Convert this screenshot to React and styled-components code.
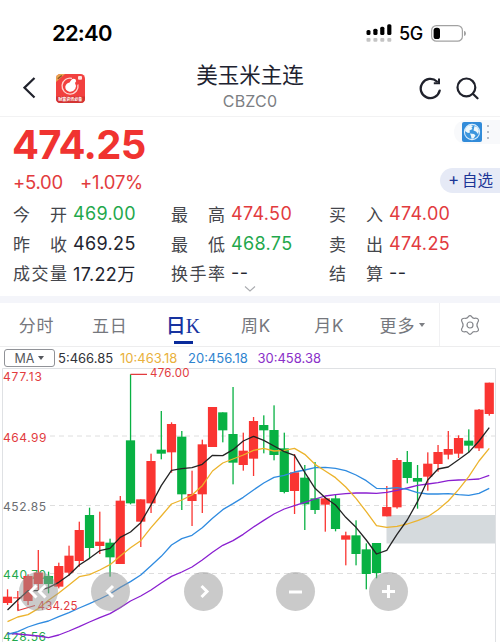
import React from 'react';
import styled, { createGlobalStyle } from 'styled-components';

const RED = '#e23b3e';
const GREEN = '#1fa84c';
const INK = '#23252f';

const GlobalStyle = createGlobalStyle`
  * {
    box-sizing: border-box;
  }

  body {
    margin: 0;
    background: #fff;
    overflow: hidden;
    font-family: Inter, 'Noto Sans CJK SC', sans-serif;
  }
`;

const quotes = [
  { label: '今开', value: '469.00', color: GREEN },
  { label: '最高', value: '474.50', color: RED },
  { label: '买入', value: '474.00', color: RED },
  { label: '昨收', value: '469.25', color: INK },
  { label: '最低', value: '468.75', color: GREEN },
  { label: '卖出', value: '474.25', color: RED },
  { label: '成交量', value: '17.22万', color: INK },
  { label: '换手率', value: '--', color: INK },
  { label: '结算', value: '--', color: INK },
];

const tabs = ['分时', '五日', '日K', '周K', '月K', '更多'];

// [up, high, bodyTop, bodyBottom, low], in thirds of a pixel below CHART_TOP
const candles = [
  [1, 673, 695, 714, 720], [1, 678, 697, 700, 736], [1, 628, 633, 708, 720], [1, 555, 623, 657, 678],
  [0, 620, 633, 657, 685], [1, 593, 603, 665, 670], [1, 542, 572, 623, 632], [1, 470, 495, 588, 605],
  [0, 428, 450, 549, 580], [1, 440, 530, 543, 567], [0, 521, 533, 577, 635], [1, 393, 407, 597, 597],
  [0, 28, 226, 415, 418], [1, 403, 403, 470, 546], [1, 266, 288, 415, 444], [0, 138, 254, 266, 283],
  [1, 172, 177, 262, 323], [0, 198, 215, 388, 435], [1, 317, 387, 408, 483], [1, 224, 238, 388, 444],
  [1, 126, 126, 246, 246], [0, 142, 142, 196, 232], [0, 66, 207, 293, 358], [1, 203, 257, 300, 317],
  [1, 156, 168, 281, 333], [0, 151, 180, 196, 265], [0, 121, 195, 270, 286], [0, 203, 250, 381, 385],
  [1, 267, 322, 378, 447], [0, 300, 338, 418, 495], [0, 291, 400, 435, 447], [1, 395, 400, 419, 500],
  [0, 387, 400, 492, 499], [1, 500, 511, 524, 601], [0, 466, 511, 567, 601], [0, 535, 553, 627, 673],
  [0, 534, 534, 624, 640], [1, 363, 426, 454, 454], [1, 279, 285, 427, 431], [0, 258, 291, 339, 355],
  [0, 300, 339, 350, 431], [1, 262, 296, 335, 377], [1, 240, 261, 297, 320], [1, 198, 252, 269, 283],
  [1, 211, 219, 266, 279], [0, 193, 227, 242, 262], [1, 132, 134, 250, 258], [1, 53, 53, 147, 152],
];

const averages = [
  {
    color: '#8a1fd0',
    points: [
      805, 807, 810, 813, 818, 810, 798, 785, 771, 758, 746, 728, 708, 693, 675, 654, 634, 621, 606, 585, 562, 541,
      527, 508, 486, 466, 447, 432, 422, 412, 402, 393, 389, 386, 384, 384, 385, 382, 376, 369, 361, 357, 353, 347,
      345, 344, 342, 331,
    ],
  },
  {
    color: '#2f8be0',
    points: [
      808, 800, 786, 776, 768, 755, 743, 729, 716, 702, 687, 667, 650, 630, 602, 574, 540, 521, 511, 488, 460, 434,
      416, 397, 375, 354, 337, 331, 321, 315, 308, 307, 310, 317, 330, 347, 370, 371, 368, 373, 383, 387, 387, 386,
      389, 391, 385, 370,
    ],
  },
  {
    color: '#ecb32c',
    points: [
      770, 756, 749, 731, 706, 684, 660, 635, 629, 615, 599, 573, 548, 527, 488, 453, 417, 405, 390, 362, 318, 294,
      282, 270, 256, 250, 258, 256, 250, 268, 298, 318, 338, 366, 400, 440, 482, 487, 484, 477, 467, 455, 434, 408,
      374, 335, 288, 250,
    ],
  },
  {
    color: '#242424',
    points: [
      735, 705, 677, 677, 668, 652, 630, 600, 580, 557, 550, 517, 501, 473, 420, 362, 316, 311, 308, 298, 271, 272,
      254, 228, 214, 226, 243, 260, 271, 322, 370, 398, 420, 457, 487, 525, 567, 556, 508, 465, 410, 345, 312, 306,
      284, 262, 228, 188,
    ],
  },
];

const CHART_TOP = 365;
const xAt = i => 7.5 + i * 10.25;
const yAt = v => CHART_TOP + v / 3;

const CandleChart = () => (
  <ChartSvg viewBox="0 368 500 274">
    <rect x="386.5" y="515" width="109" height="28.5" fill="#d5dadd" />
    <path d="M2.5 642V368.5H495.5V642" fill="none" stroke="#dfe1e4" />
    <path d="M50 436H495M50 505.5H495M50 573.5H495" stroke="#dedede" strokeDasharray="5 4" />
    <AxisText x="3" y="380.6" textLength="39" fill={RED}>477.13</AxisText>
    <AxisText x="3" y="441.8" textLength="43.5" fill={RED}>464.99</AxisText>
    <AxisText x="3" y="511.4" textLength="43" fill="#6b6d72">452.85</AxisText>
    <AxisText x="3" y="578.8" textLength="43" fill={GREEN}>440.70</AxisText>
    <AxisText x="3" y="640.8" textLength="43" fill={GREEN}>428.56</AxisText>
    {candles.map(([up, high, top, bottom, low], i) => {
      const color = up ? '#fa3532' : '#08b143';
      return (
        <g key={i} fill={color}>
          <rect x={xAt(i) - 0.6} y={yAt(high)} width="1.3" height={(low - high) / 3} />
          <rect x={xAt(i) - 4.6} y={yAt(top)} width="9.2" height={(bottom - top) / 3} />
        </g>
      );
    })}
    {averages.map(({ color, points }) => (
      <polyline
        key={color}
        points={points.map((p, i) => `${xAt(i)},${yAt(p)}`).join(' ')}
        fill="none"
        stroke={color}
        strokeWidth="1.3"
        strokeLinejoin="round"
      />
    ))}
    <path d="M130.5 374.3H147M18 604V610.5L35 605.5" fill="none" stroke={RED} strokeWidth="1.2" />
    <AxisText x="150" y="377.2" textLength="39.5" $small fill={RED}>476.00</AxisText>
    <AxisText x="37.5" y="610.2" textLength="40" $small fill={RED}>434.25</AxisText>
  </ChartSvg>
);

const controls = [
  'M26.500 13.500L20.500 19.500L26.500 25.500M17.500 13.500L11.500 19.500L17.500 25.500',
  'M22 14L16.500 19.500L22 25',
  'M17.500 14L23 19.500L17.500 25',
  'M13 20H26',
  'M13 19.500H26M19.500 13V26',
];

const App = () => (
  <Screen>
    <GlobalStyle />
    <StatusBar>
      <Clock>22:40</Clock>
      <Signal viewBox="0 0 26 18">
        <g fill="#000">
          <rect x="0.5" y="6" width="4" height="5" rx="1.5" />
          <rect x="7.3" y="4.7" width="4.2" height="6.3" rx="1.5" />
          <rect x="14.2" y="2.7" width="4.2" height="8.3" rx="1.5" />
          <rect x="21.2" y="0.3" width="4.2" height="10.7" rx="1.5" />
        </g>
        <g fill="#c4c4c4">
          <rect x="0.5" y="14" width="4" height="3.7" rx="1" />
          <rect x="7.4" y="14" width="4" height="3.7" rx="1" />
          <rect x="14.3" y="14" width="4" height="3.7" rx="1" />
          <rect x="21.3" y="14" width="4" height="3.7" rx="1" />
        </g>
      </Signal>
      <Network>5G</Network>
      <Battery viewBox="0 0 36 17">
        <rect x="0.6" y="0.6" width="30.8" height="15.6" rx="4.8" fill="none" stroke="#a2a2a2" strokeWidth="1.2" />
        <rect x="2.6" y="2.8" width="6.4" height="11.2" rx="2.6" />
        <path d="M33 5.8q2 .5 2 2.600t-2 2.600z" fill="#a2a2a2" />
      </Battery>
    </StatusBar>

    <Header>
      <HeaderSide>
        <svg width="13" height="22" viewBox="0 0 13 22" fill="none" stroke="#20222c" strokeWidth="2.2">
          <path d="M11.500 1L1.500 10.700L11.500 20.500" />
        </svg>
        <AppLogo viewBox="0 0 29 29">
          <rect width="29" height="29" rx="4.5" fill="#f2403f" />
          <path d="M4.500 0H9L0 8V4.500Q0 0 4.500 0Z" fill="#e8a552" />
          <path d="M1.800 4.800L5.800 1.500" stroke="#865324" strokeWidth="1.3" />
          <path d="M16 4.300A8 8 0 1 0 21.900 10.500" fill="none" stroke="#ffd5d0" strokeWidth="1.3" />
          <path d="M14.500 7Q16.500 3.600 19.500 5.200Q21 7.200 19 9Q20.700 11.500 19.300 14.800Q17 18.500 13.200 17.700Q9 16.500 9.300 12.600Q10.200 9.200 13.600 8.600Z" fill="#fff" />
          <rect x="22" y="2" width="4" height="3.7" rx="1" fill="#ffe2df" />
          <path d="M0 22.500H29V24.500Q29 29 24.500 29H4.500Q0 29 0 24.500Z" fill="#d43433" />
          <LogoText x="2.3" y="27.3" textLength="24">财富资讯必备</LogoText>
        </AppLogo>
      </HeaderSide>
      <Titles>
        <Title>美玉米主连</Title>
        <Code>CBZC0</Code>
      </Titles>
      <HeaderSide $end>
        <svg width="23" height="23" viewBox="0 0 23 23" fill="none" stroke="#20222c" strokeWidth="2.3">
          <path d="M20.700 13.600A9.600 9.600 0 1 1 17.900 4.500" strokeLinecap="round" />
          <path d="M20 1.400V6.200H14.800" strokeWidth="2" />
        </svg>
        <svg width="23" height="23" viewBox="0 0 23 23" fill="none" stroke="#20222c" strokeWidth="2.2">
          <circle cx="10.4" cy="10.4" r="8.9" />
          <path d="M16.800 16.800L21.500 21.300" strokeLinecap="round" />
        </svg>
      </HeaderSide>
    </Header>

    <Summary>
      <PriceRow>
        <Price>474.25</Price>
        <Market>
          <svg width="20" height="20" viewBox="0 0 20 20">
            <rect width="20" height="20" rx="2" fill="#318bd9" />
            <circle cx="10" cy="10" r="7.6" fill="#3c96de" stroke="#d9edfc" strokeWidth="1.1" />
            <path d="M3 8L5 4.500L8.500 3L11 4L9.500 5.500L10.500 7L7.500 8.500L8 10.500L6 11L3.500 9.500ZM12.500 4L15.500 5.500L17 9L16 12L14 9.500L11.500 8.500ZM8 11.500L12 12L13.500 13.500L11.500 16.500L9.500 16.800L9 14Z" fill="#edf7fb" />
          </svg>
          <Dots><i /><i /><i /></Dots>
        </Market>
      </PriceRow>
      <ChangeRow>
        <Change>+5.00</Change>
        <Change>+1.07%</Change>
        <AddButton><Plus>+</Plus>自选</AddButton>
      </ChangeRow>
      <QuoteGrid>
        {quotes.map(({ label, value, color }) => (
          <Quote key={label}>
            <Label>{label.split('').map(c => <span key={c}>{c}</span>)}</Label>
            <Value $color={color}>{value}</Value>
          </Quote>
        ))}
      </QuoteGrid>
      <Expand viewBox="0 0 12 6">
        <path d="M1 0.500L6 5L11 0.500" fill="none" stroke="#aaacb0" strokeWidth="1.1" />
      </Expand>
    </Summary>

    <TabBar>
      <Tabs>
        {tabs.map(tab => (
          <Tab key={tab} $active={tab === '日K'}>
            {tab}
            {tab === '更多' && <Caret />}
          </Tab>
        ))}
      </Tabs>
      <Settings>
        <svg width="20" height="20" viewBox="0 0 20 20" fill="none" stroke="#85878c" strokeWidth="1.2" strokeLinejoin="round">
          <path d="M8.200 1.900Q10 -.5 11.800 1.900Q12.800 3.500 14.500 3.300Q18.200 2.800 18.500 5.300Q18.600 6.100 17.800 7.200Q16 10 17.800 12.800Q19.500 15.500 17 16.500Q16.200 16.800 14.500 16.700Q12.800 16.500 11.800 18.100Q10 20.500 8.200 18.100Q7.200 16.500 5.500 16.700Q1.800 17.200 1.500 14.700Q1.400 13.900 2.200 12.800Q4 10 2.200 7.200Q.5 4.500 3 3.500Q3.800 3.200 5.500 3.300Q7.200 3.500 8.200 1.900Z" />
          <circle cx="10" cy="10" r="3" />
        </svg>
      </Settings>
    </TabBar>

    <Legend>
      <MaSelect>MA<Caret $dark /></MaSelect>
      <LegendItem $width={62} $color="#303238">5:466.85</LegendItem>
      <LegendItem $width={68} $color="#e9b13c">10:463.18</LegendItem>
      <LegendItem $width={69.5} $color="#2f84cf">20:456.18</LegendItem>
      <LegendItem $width={70} $color="#8a30c9">30:458.38</LegendItem>
    </Legend>

    <ChartArea>
      <CandleChart />
      <Controls>
        {controls.map(d => (
          <ControlButton key={d}>
            <svg width="39" height="39" viewBox="0 0 39 39" fill="none" stroke="#fff" strokeWidth="3">
              <path d={d} />
            </svg>
          </ControlButton>
        ))}
      </Controls>
    </ChartArea>
  </Screen>
);

const Screen = styled.div`
  display: flex;
  flex-direction: column;
  width: 500px;
  height: 642px;
  overflow: hidden;
  background: #fff;
`;

const StatusBar = styled.div`
  display: flex;
  align-items: center;
  height: 60px;
  padding: 7px 33px 0 52px;
`;

const Clock = styled.div`
  flex: 1;
  padding-bottom: 1px;
  font-size: 22px;
  font-weight: 600;
  letter-spacing: -0.8px;
  color: #000;
`;

const Signal = styled.svg`
  width: 26px;
  height: 18px;
  margin-top: -2px;
`;

const Network = styled.div`
  width: 24px;
  margin: 0 8px 0 7px;
  font-size: 18px;
  font-weight: 500;
  letter-spacing: -0.5px;
`;

const Battery = styled.svg`
  width: 36px;
  height: 17px;
`;

const Header = styled.div`
  display: flex;
  align-items: center;
  height: 57px;
  padding: 0 21px 0 23px;
  border-bottom: 1px solid #f2f2f3;
`;

const HeaderSide = styled.div`
  display: flex;
  flex: 1;
  align-items: center;
  justify-content: ${props => (props.$end ? 'flex-end' : 'flex-start')};
  gap: ${props => (props.$end ? '14px' : '20px')};
`;

const AppLogo = styled.svg`
  width: 29px;
  height: 29px;
`;

const LogoText = styled.text`
  font-size: 4px;
  font-weight: 700;
  fill: #fff;
`;

const Titles = styled.div`
  display: flex;
  flex-direction: column;
  align-items: center;
  margin: -2px 2px 0 0;
`;

const Title = styled.div`
  font-size: 21.5px;
  line-height: 28px;
  color: #20222f;
`;

const Code = styled.div`
  font-size: 16px;
  line-height: 24px;
  letter-spacing: 0.2px;
  color: #7c7e83;
`;

const Summary = styled.div`
  display: flex;
  flex-direction: column;
  height: 179px;
`;

const PriceRow = styled.div`
  display: flex;
  justify-content: space-between;
  height: 49px;
  padding-left: 12px;
`;

const Price = styled.div`
  padding-top: 3px;
  font-size: 40px;
  line-height: 50px;
  font-weight: 650;
  letter-spacing: -0.7px;
  color: #f03330;
`;

const Market = styled.div`
  display: flex;
  align-items: center;
  width: 46px;
  height: 24px;
  margin-top: 3px;
  padding-left: 8px;
  gap: 5px;
  border-radius: 12px 0 0 12px;
  background: #f8f9fb;
`;

const Dots = styled.div`
  display: flex;
  flex-direction: column;
  gap: 4px;

  i {
    width: 2px;
    height: 2px;
    background: #b4bbc6;
  }
`;

const ChangeRow = styled.div`
  display: flex;
  align-items: center;
  height: 32px;
  padding-left: 13px;
  gap: 17px;
`;

const Change = styled.div`
  font-size: 18.5px;
  letter-spacing: -0.25px;
  color: ${RED};
`;

const AddButton = styled.div`
  display: flex;
  align-items: center;
  width: 60px;
  height: 25px;
  margin-left: auto;
  margin-top: -4px;
  padding: 0 0 2px 8px;
  border-radius: 13px 0 0 13px;
  background: #e6eaf6;
  color: #1b3596;
  font-size: 15.5px;
`;

const Plus = styled.span`
  width: 14px;
  font-size: 17px;
`;

const QuoteGrid = styled.div`
  display: grid;
  grid-template-columns: 158px 158px 158px;
  grid-auto-rows: 29.5px;
  padding: 1px 0 0 13px;
`;

const Quote = styled.div`
  display: flex;
  align-items: center;
  gap: 6px;
`;

const Label = styled.div`
  display: flex;
  justify-content: space-between;
  width: 54px;
  font-size: 17px;
  color: #44464c;
`;

const Value = styled.div`
  font-size: 18px;
  letter-spacing: 0.35px;
  white-space: nowrap;
  color: ${props => props.$color};
`;

const Expand = styled.svg`
  align-self: center;
  width: 12px;
  height: 6px;
  margin-top: -2px;
`;

const TabBar = styled.div`
  display: flex;
  height: 51px;
  border-top: 7px solid #f4f5fa;
  border-bottom: 1px solid #ededee;
`;

const Tabs = styled.div`
  display: grid;
  grid-template-columns: repeat(6, 1fr);
  width: 440px;
  border-right: 1px solid #f1f1f3;
`;

const Tab = styled.div`
  display: flex;
  align-items: center;
  justify-content: center;
  font-family: ${props => (props.$active ? "'Liberation Serif', 'Noto Sans CJK SC', serif" : 'inherit')};
  font-size: ${props => (props.$active ? '20px' : '17px')};
  font-weight: ${props => (props.$active ? 500 : 400)};
  letter-spacing: ${props => (props.$active ? '0' : '0.8px')};
  color: ${props => (props.$active ? '#1733a0' : '#75777d')};

  ${props =>
    props.$active &&
    `
    background: linear-gradient(#0a2b9b, #0a2b9b) 28px 38px / 19px 3px no-repeat;
  `}
`;

const Caret = styled.span`
  margin-left: 4px;
  border: solid transparent;
  border-width: ${props => (props.$dark ? '4px 3px 0' : '4px 3px 0')};
  border-top-color: ${props => (props.$dark ? '#55575c' : '#7d7f84')};
`;

const Settings = styled.div`
  display: flex;
  flex: 1;
  align-items: center;
  justify-content: center;
`;

const Legend = styled.div`
  display: flex;
  align-items: center;
  height: 21px;
  padding-left: 4px;
`;

const MaSelect = styled.div`
  display: flex;
  align-items: center;
  justify-content: center;
  width: 51px;
  height: 18px;
  margin: 1px 3px 0 0;
  border: 1px solid #909297;
  border-radius: 3px;
  font-size: 12.5px;
  color: #55575c;
`;

const LegendItem = styled.div`
  width: ${props => props.$width}px;
  font-size: 13px;
  color: ${props => props.$color};
`;

const ChartArea = styled.div`
  position: relative;
  flex: 1;
`;

const ChartSvg = styled.svg`
  display: block;
  width: 500px;
  height: 274px;
  overflow: visible;
`;

const AxisText = styled.text`
  font-size: ${props => (props.$small ? '11.5px' : '12px')};
`;

// floats over the lower part of the chart
const Controls = styled.div`
  position: absolute;
  top: 204px;
  left: 19px;
  display: flex;
  gap: 53.5px;
`;

const ControlButton = styled.button`
  width: 39px;
  height: 39px;
  padding: 0;
  border: 0;
  border-radius: 50%;
  background: rgba(150, 150, 150, 0.5);

  &:first-child {
    margin-right: -20.5px;
  }
`;

export default App;
